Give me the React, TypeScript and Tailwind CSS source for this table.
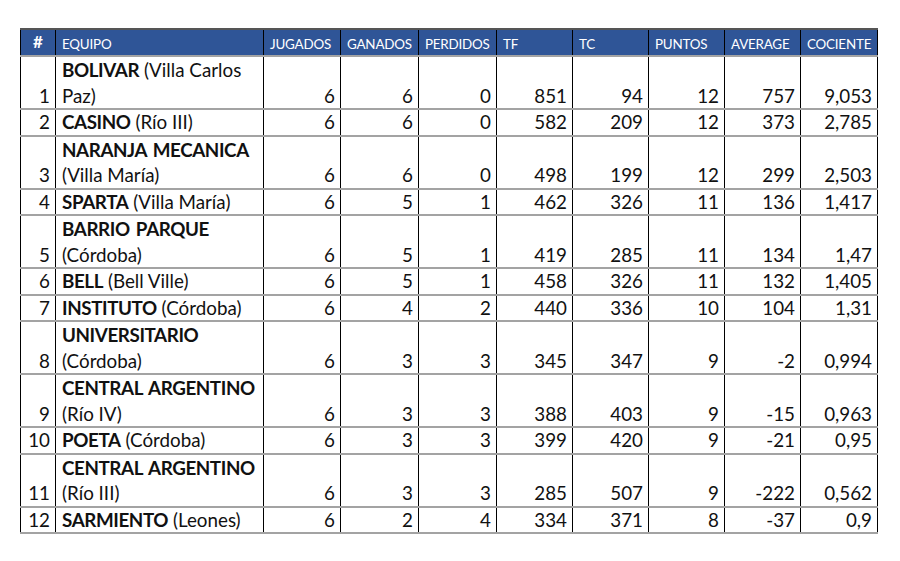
import React from 'react';

type Row = {
  pos: number;
  name: string;
  place: string;
  // where the team line breaks onto the second line
  lines?: [React.ReactNode, React.ReactNode];
  pj: number;
  pg: number;
  pp: number;
  tf: number;
  tc: number;
  pts: number;
  avg: number;
  coc: string;
};

const B = ({ children }: { children: React.ReactNode }) => (
  <b className="tracking-[-0.4px] [word-spacing:2px]">{children}</b>
);

const rows: Row[] = [
  { pos: 1, name: 'BOLIVAR', place: 'Villa Carlos Paz', lines: [<><B>BOLIVAR</B> (Villa Carlos</>, 'Paz)'], pj: 6, pg: 6, pp: 0, tf: 851, tc: 94, pts: 12, avg: 757, coc: '9,053' },
  { pos: 2, name: 'CASINO', place: 'Río III', pj: 6, pg: 6, pp: 0, tf: 582, tc: 209, pts: 12, avg: 373, coc: '2,785' },
  { pos: 3, name: 'NARANJA MECANICA', place: 'Villa María', lines: [<B>NARANJA MECANICA</B>, '(Villa María)'], pj: 6, pg: 6, pp: 0, tf: 498, tc: 199, pts: 12, avg: 299, coc: '2,503' },
  { pos: 4, name: 'SPARTA', place: 'Villa María', pj: 6, pg: 5, pp: 1, tf: 462, tc: 326, pts: 11, avg: 136, coc: '1,417' },
  { pos: 5, name: 'BARRIO PARQUE', place: 'Córdoba', lines: [<B>BARRIO PARQUE</B>, '(Córdoba)'], pj: 6, pg: 5, pp: 1, tf: 419, tc: 285, pts: 11, avg: 134, coc: '1,47' },
  { pos: 6, name: 'BELL', place: 'Bell Ville', pj: 6, pg: 5, pp: 1, tf: 458, tc: 326, pts: 11, avg: 132, coc: '1,405' },
  { pos: 7, name: 'INSTITUTO', place: 'Córdoba', pj: 6, pg: 4, pp: 2, tf: 440, tc: 336, pts: 10, avg: 104, coc: '1,31' },
  { pos: 8, name: 'UNIVERSITARIO', place: 'Córdoba', lines: [<B>UNIVERSITARIO</B>, '(Córdoba)'], pj: 6, pg: 3, pp: 3, tf: 345, tc: 347, pts: 9, avg: -2, coc: '0,994' },
  { pos: 9, name: 'CENTRAL ARGENTINO', place: 'Río IV', lines: [<B>CENTRAL ARGENTINO</B>, '(Río IV)'], pj: 6, pg: 3, pp: 3, tf: 388, tc: 403, pts: 9, avg: -15, coc: '0,963' },
  { pos: 10, name: 'POETA', place: 'Córdoba', pj: 6, pg: 3, pp: 3, tf: 399, tc: 420, pts: 9, avg: -21, coc: '0,95' },
  { pos: 11, name: 'CENTRAL ARGENTINO', place: 'Río III', lines: [<B>CENTRAL ARGENTINO</B>, '(Río III)'], pj: 6, pg: 3, pp: 3, tf: 285, tc: 507, pts: 9, avg: -222, coc: '0,562' },
  { pos: 12, name: 'SARMIENTO', place: 'Leones', pj: 6, pg: 2, pp: 4, tf: 334, tc: 371, pts: 8, avg: -37, coc: '0,9' },
];

const heads = ['EQUIPO', 'JUGADOS', 'GANADOS', 'PERDIDOS', 'TF', 'TC', 'PUNTOS', 'AVERAGE', 'COCIENTE'];
const widths = [35, 208, 77, 78, 78, 76, 76, 76, 76, 77];

export default function App() {
  return (
    <div className="w-[900px] h-[561px] bg-white pt-[28px] pl-[20px] font-['Lato',sans-serif] text-[#111]">
      <table className="table-fixed border-collapse w-[857px]">
        <colgroup>
          {widths.map((w, i) => (
            <col key={i} style={{ width: w }} />
          ))}
        </colgroup>
        <thead>
          <tr className="h-[27px] bg-[#2f5597] text-white">
            <th className="border-t-2 border-t-[#555] border-x border-x-black align-top pt-[2px] text-center text-[17px] font-bold leading-[20px]">
              #
            </th>
            {heads.map((h) => (
              <th
                key={h}
                className="border-t-2 border-t-[#555] border-x border-x-black align-bottom pb-[3px] pl-[6px] text-left text-[13.4px] font-normal leading-[15px] whitespace-nowrap tracking-[-0.2px]"
              >
                {h}
              </th>
            ))}
          </tr>
        </thead>
        <tbody className="text-[18.8px]">
          {rows.map((r) => {
            const tall = !!r.lines;
            const cell = 'border-x border-x-black border-y-2 border-y-[#a3a3a3] align-bottom text-right pr-[5px] whitespace-nowrap';
            return (
              <tr key={r.pos} className={tall ? 'leading-[25.5px]' : 'leading-[24.5px]'}>
                <td className={cell}>{r.pos}</td>
                <td className="border-x border-x-black border-y-2 border-y-[#a3a3a3] align-bottom text-left pl-[6px] whitespace-nowrap">
                  {r.lines ? (
                    <>
                      {r.lines[0]}
                      <br />
                      {r.lines[1]}
                    </>
                  ) : (
                    <>
                      <B>{r.name}</B> ({r.place})
                    </>
                  )}
                </td>
                <td className={cell}>{r.pj}</td>
                <td className={cell}>{r.pg}</td>
                <td className={cell}>{r.pp}</td>
                <td className={cell}>{r.tf}</td>
                <td className={cell}>{r.tc}</td>
                <td className={cell}>{r.pts}</td>
                <td className={cell}>{r.avg}</td>
                <td className={cell}>{r.coc}</td>
              </tr>
            );
          })}
        </tbody>
      </table>
    </div>
  );
}
